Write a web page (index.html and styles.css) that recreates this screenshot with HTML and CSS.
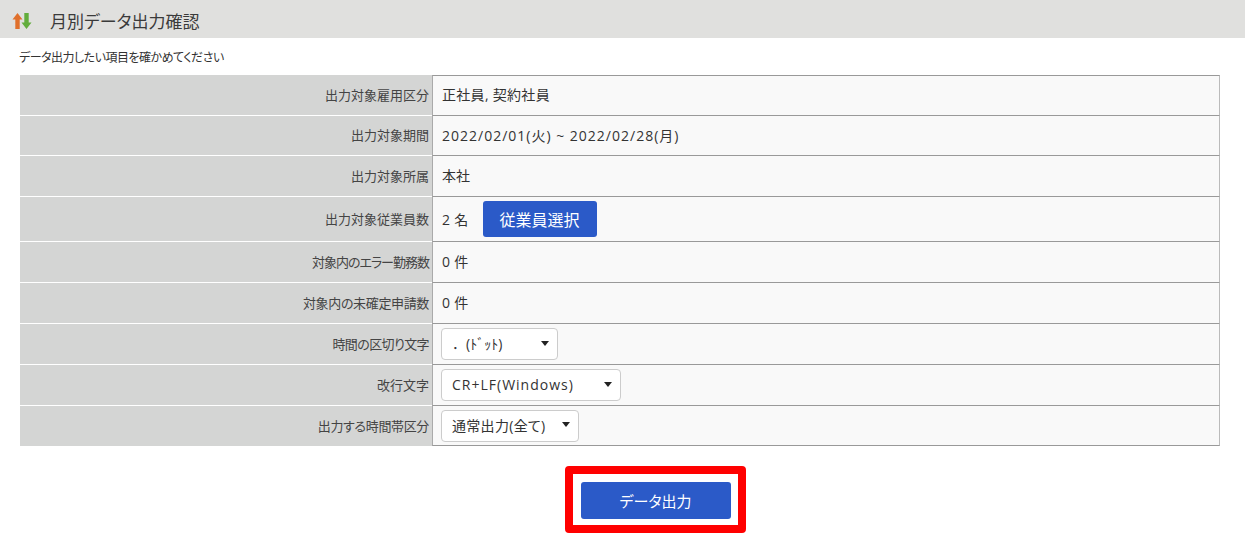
FILE: index.html
```html
<!DOCTYPE html>
<html lang="ja">
<head>
<meta charset="utf-8">
<title>月別データ出力確認</title>
<link rel="stylesheet" href="styles.css">
</head>
<body>
<header class="title-bar">
  <svg class="title-icon" width="20" height="18" viewBox="0 0 20 18" aria-hidden="true">
    <path d="M5.500 1 .5 7.500h2.800V17h4.400V7.500h2.800z" fill="#e0702c"/>
    <path d="M12.300 1h4.400v9.500h2.800l-5 6.500-5-6.500h2.800z" fill="#62ad3c"/>
  </svg>
  <h1 class="title">月別データ出力確認</h1>
</header>
<p class="lead">データ出力したい項目を確かめてください</p>
<table class="confirm">
  <tbody>
    <tr class="r40"><th>出力対象雇用区分</th><td class="num first">正社員, 契約社員</td></tr>
    <tr class="r40"><th>出力対象期間</th><td class="latin">2022/02/01(火) ~ 2022/02/28(月)</td></tr>
    <tr class="r41"><th>出力対象所属</th><td>本社</td></tr>
    <tr class="r45"><th>出力対象従業員数</th><td><div class="count"><span class="num">2 名</span><button class="btn btn-small" type="button">従業員選択</button></div></td></tr>
    <tr class="r41"><th class="tight-3">対象内のエラー勤務数</th><td class="num">0 件</td></tr>
    <tr class="r41"><th class="tight-1">対象内の未確定申請数</th><td class="num">0 件</td></tr>
    <tr class="r41"><th class="tight-2">時間の区切り文字</th><td><div class="select s1"><span class="full">．(ﾄﾞｯﾄ)</span><i class="caret"></i></div></td></tr>
    <tr class="r41"><th>改行文字</th><td><div class="select s2"><span class="latin">CR+LF(Windows)</span><i class="caret"></i></div></td></tr>
    <tr class="r41"><th class="tight-1">出力する時間帯区分</th><td><div class="select s3"><span class="num">通常出力(全て)</span><i class="caret"></i></div></td></tr>
  </tbody>
</table>
<div class="actions">
  <div class="highlight"><button class="btn btn-main" type="button">データ出力</button></div>
</div>
</body>
</html>
```

FILE: styles.css
```css
* { box-sizing: border-box; }
html, body { margin: 0; padding: 0; background: #fff; }
body {
  height: 535px;
  overflow: hidden;
  color: #333;
  font-family: "Open Sans", "Noto Sans CJK JP", sans-serif;
  font-feature-settings: "palt";
}
.title-bar {
  display: flex;
  align-items: center;
  height: 38px;
  background: #e0e0de;
  padding: 3px 0 0 12px;
}
.title-icon { width: 20px; height: 18px; flex: none; }
.title {
  margin: 0 0 0 18px;
  font-size: 17px;
  font-weight: 400;
  color: #3a3a3a;
}
.lead {
  margin: 0;
  height: 37px;
  padding: 11px 0 0 19px;
  font-size: 12px;
  line-height: 17px;
  letter-spacing: -0.5px;
}
.confirm {
  width: 1200px;
  margin-left: 20px;
  border-collapse: separate;
  border-spacing: 0;
  table-layout: fixed;
}
.confirm th {
  width: 412px;
  padding: 0 3px 2px 0;
  background: #d4d5d4;
  border-top: 1px solid #fff;
  font-size: 13px;
  font-weight: 400;
  text-align: right;
  color: #444;
}
.confirm tr:first-child th { border-top-color: #d4d5d4; }
.confirm th.tight-1 { letter-spacing: -0.35px; }
.confirm th.tight-2 { letter-spacing: -0.6px; }
.confirm th.tight-3 { letter-spacing: -1px; }
.confirm td {
  padding: 0 0 2px 9px;
  background: #f9f9f9;
  border-top: 1px solid #999;
  border-left: 1px solid #aaa;
  border-right: 1px solid #bbb;
  font-size: 14px;
  color: #333;
}
.confirm td.first { padding-bottom: 4px; }
.confirm tr:last-child td { border-bottom: 1px solid #999; }
.r40 { height: 40px; }
.r41 { height: 41px; }
.r45 { height: 45px; }
.confirm .latin, .latin { letter-spacing: 1px; }
.confirm .num, .num { letter-spacing: 0.3px; }
.full { font-feature-settings: normal; }
.count { display: flex; align-items: center; gap: 14px; padding-top: 2px; }
.btn {
  border: 0;
  background: #2b5ac8;
  color: #fff;
  font-family: inherit;
  font-feature-settings: inherit;
  border-radius: 3px;
  padding: 0;
}
.btn-small { width: 114px; height: 36px; font-size: 16px; }
.select {
  display: flex;
  align-items: center;
  justify-content: space-between;
  height: 32px;
  margin: 2px 0 0 -1px;
  padding: 0 8px 2px 10px;
  background: #fff;
  border: 1px solid #ccc;
  border-radius: 4px;
}
.s1 { width: 117px; }
.s2 { width: 180px; }
.s3 { width: 138px; }
.caret {
  width: 0;
  height: 0;
  border-left: 4.5px solid transparent;
  border-right: 4.5px solid transparent;
  border-top: 5px solid #222;
}
.actions { display: flex; justify-content: center; padding: 20px 0 0 66px; }
.highlight {
  width: 181px;
  height: 67px;
  border: 8px solid #f00;
  border-radius: 4px;
  display: flex;
  align-items: center;
  justify-content: center;
  padding-top: 1px;
}
.btn-main { width: 150px; height: 37px; font-size: 15px; }
```
